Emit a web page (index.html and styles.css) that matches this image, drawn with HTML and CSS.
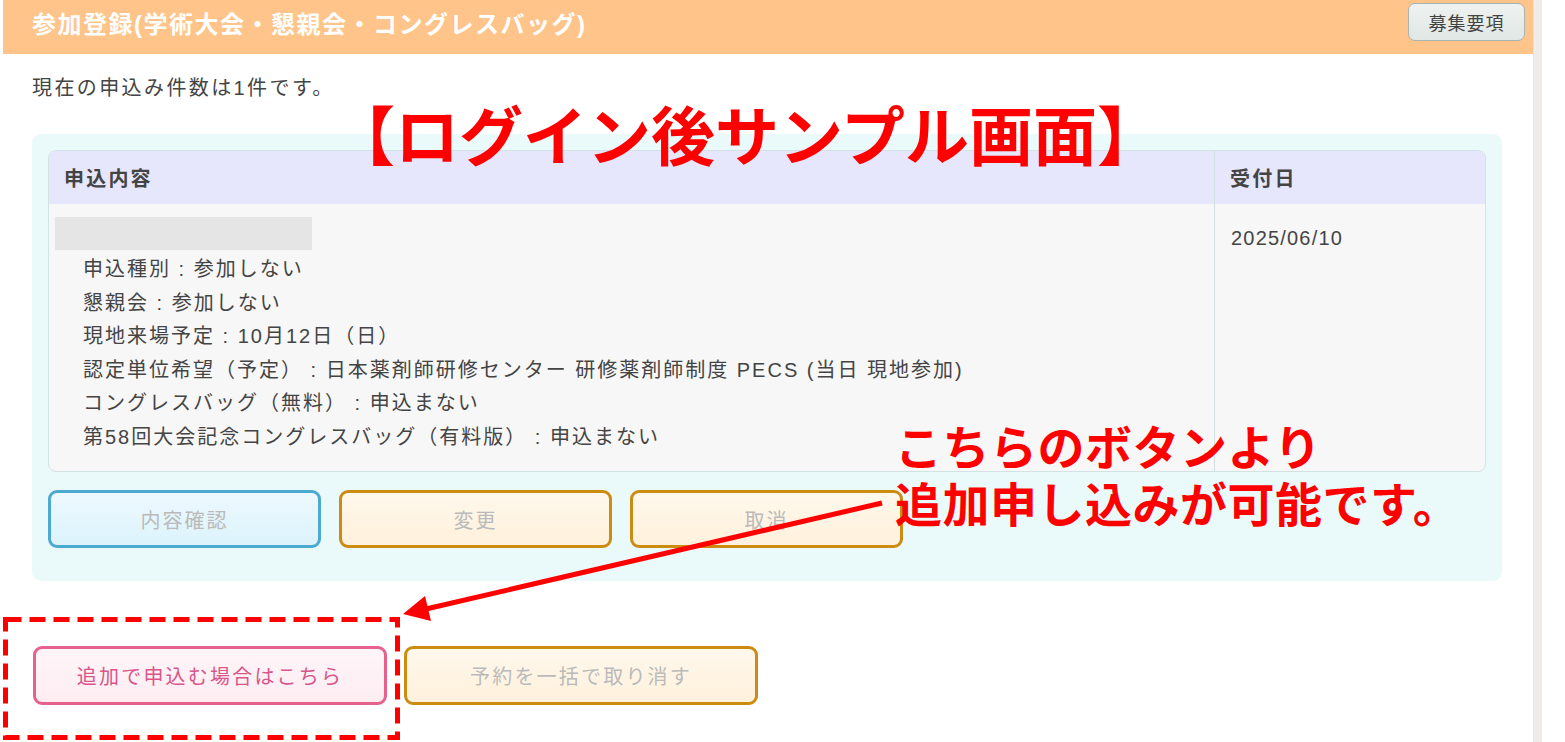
FILE: index.html
```html
<!DOCTYPE html>
<html lang="ja">
<head>
<meta charset="utf-8">
<title>参加登録</title>
<link rel="stylesheet" href="styles.css">
</head>
<body>
<div class="shell">
  <div class="panel">
    <header class="titlebar">
      <h1 class="title">参加登録(学術大会・懇親会・コングレスバッグ)</h1>
      <button class="guide">募集要項</button>
    </header>
    <p class="count">現在の申込み件数は1件です。</p>
    <section class="entry-box">
      <div class="entries">
        <div class="th">申込内容</div>
        <div class="th th-date">受付日</div>
        <div class="td td-main">
          <div class="redacted"></div>
          <ul class="details">
            <li>申込種別 : 参加しない</li>
            <li>懇親会 : 参加しない</li>
            <li>現地来場予定 : 10月12日（日）</li>
            <li>認定単位希望（予定） : 日本薬剤師研修センター 研修薬剤師制度 PECS (当日 現地参加)</li>
            <li>コングレスバッグ（無料） : 申込まない</li>
            <li>第58回大会記念コングレスバッグ（有料版） : 申込まない</li>
          </ul>
        </div>
        <div class="td td-date">2025/06/10</div>
      </div>
      <div class="actions">
        <button class="btn btn-blue">内容確認</button>
        <button class="btn btn-orange">変更</button>
        <button class="btn btn-orange">取消</button>
      </div>
    </section>
    <div class="bottom-actions">
      <button class="btn btn-pink btn-wide">追加で申込む場合はこちら</button>
      <button class="btn btn-orange btn-wide">予約を一括で取り消す</button>
    </div>
  </div>
  <div class="rail"></div>

  <svg class="overlay" width="1565" height="742" viewBox="0 0 1565 742" aria-hidden="true">
    <line x1="882" y1="503" x2="426" y2="609" stroke="#ff0000" stroke-width="5"/>
    <polygon points="403,614 431,621 425,596" fill="#ff0000"/>
    <rect x="5.5" y="619.5" width="392" height="118" fill="none" stroke="#ff0000" stroke-width="5" stroke-dasharray="16 8"/>
  </svg>
  <div class="note note-title">【ログイン後サンプル画面】</div>
  <div class="note note-callout">こちらのボタンより<br>追加申し込みが可能です。</div>
</div>
</body>
</html>
```

FILE: styles.css
```css
* { box-sizing: border-box; }

html, body {
  margin: 0;
  padding: 0;
  background: #ffffff;
}

body {
  font-family: "Liberation Sans", "Noto Sans CJK JP", sans-serif;
  color: #444444;
  width: 1565px;
  height: 742px;
  overflow: hidden;
}

.shell {
  position: relative;
  display: flex;
  padding-left: 3px;
  height: 742px;
}

.panel {
  width: 1530px;
  background: #ffffff;
  border-bottom-right-radius: 6px;
}

.rail {
  width: 9px;
  background: #eeede9;
  border-left: 1px solid #e4e3df;
}

/* title bar */
.titlebar {
  height: 54px;
  background: #ffc48a;
  display: flex;
  align-items: flex-start;
  justify-content: space-between;
  padding: 0 8px 0 29px;
}

.title {
  margin: 0;
  padding-top: 9px;
  font-size: 24px;
  font-weight: 700;
  color: #ffffff;
  letter-spacing: 1.5px;
  line-height: 32px;
}

.guide {
  margin-top: 3px;
  width: 117px;
  height: 38px;
  border: 1px solid #a9b3b1;
  border-radius: 7px;
  background: linear-gradient(#eef2f1, #e1e7e5);
  font-family: inherit;
  font-size: 18px;
  color: #444444;
  letter-spacing: 1px;
  padding: 0;
}

.count {
  margin: 19px 0 0 29px;
  font-size: 20px;
  line-height: 30px;
  letter-spacing: 2.4px;
  color: #444444;
}

/* entry box */
.entry-box {
  margin: 31px 0 0 29px;
  width: 1470px;
  background: #eafafa;
  border-radius: 9px;
  padding: 16px 16px 33px 16px;
}

.entries {
  display: grid;
  grid-template-columns: 1165px 1fr;
  border: 1px solid #d3e2e3;
  border-radius: 8px;
  overflow: hidden;
  background: #f7f7f7;
}

.th {
  background: #e6e6fd;
  height: 53px;
  display: flex;
  align-items: center;
  padding-left: 15px;
  font-size: 20px;
  font-weight: 700;
  letter-spacing: 2.2px;
  color: #444444;
}

.th-date,
.td-date {
  border-left: 1px solid #d3e0e1;
}

.td {
  font-size: 20px;
  color: #444444;
  letter-spacing: 2px;
}

.td-main {
  padding: 13px 7px 17px 6px;
}

.redacted {
  width: 257px;
  height: 33px;
  background: #e5e5e5;
}

.details {
  list-style: none;
  margin: 3px 0 0 0;
  padding: 0 0 0 28px;
}

.details li {
  line-height: 33.5px;
  white-space: nowrap;
}

.td-date {
  padding: 18px 0 0 16px;
  line-height: 33.5px;
  letter-spacing: 1.2px;
}

/* buttons */
.actions {
  display: flex;
  gap: 18px;
  margin-top: 18px;
}

.btn {
  width: 273px;
  height: 58px;
  border-radius: 9px;
  border: 3px solid;
  font-family: inherit;
  font-size: 20px;
  letter-spacing: 2px;
  color: #bababa;
  padding: 0;
}

.btn-blue {
  border-color: #4aaacf;
  background: linear-gradient(#edf9fe, #dcf3fc);
}

.btn-orange {
  border-color: #cc8c12;
  background: linear-gradient(#fff8ec, #fff1dc);
}

.btn-pink {
  border-color: #e6628d;
  background: linear-gradient(#fff5f8, #fdedf2);
  color: #d9568a;
}

.btn-wide {
  width: 354px;
  height: 59px;
  letter-spacing: 2.2px;
}

.bottom-actions {
  display: flex;
  gap: 17px;
  margin: 65px 0 0 30px;
}

/* annotations overlaid on the screenshot */
.overlay {
  position: absolute;
  left: 0;
  top: 0;
  pointer-events: none;
}

.note {
  position: absolute;
  font-family: "Noto Sans CJK JP", sans-serif;
  font-weight: 700;
  color: #ff0000;
  line-height: 1;
  white-space: nowrap;
}

.note-title {
  left: 331px;
  top: 100px;
  font-size: 64px;
}

.note-callout {
  left: 895px;
  top: 416px;
  font-size: 47px;
  line-height: 57px;
  letter-spacing: 0.5px;
}
```
